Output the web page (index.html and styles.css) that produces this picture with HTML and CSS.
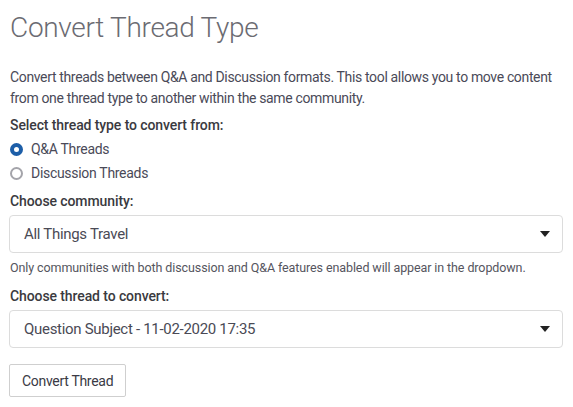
FILE: index.html
```html
<!DOCTYPE html>
<html>
<head>
<meta charset="utf-8">
<link rel="stylesheet" href="styles.css">
</head>
<body>
<div class="page">
  <h1 class="title">Convert Thread Type</h1>
  <p class="intro">Convert threads between Q&amp;A and Discussion formats. This tool allows you to move content from one thread type to another within the same community.</p>
  <div class="field">
    <div class="label">Select thread type to convert from:</div>
    <label class="radio"><span class="dot on"></span>Q&amp;A Threads</label>
    <label class="radio"><span class="dot"></span>Discussion Threads</label>
  </div>
  <div class="field">
    <div class="label">Choose community:</div>
    <div class="select"><span>All Things Travel</span><span class="caret"></span></div>
    <div class="help">Only communities with both discussion and Q&amp;A features enabled will appear in the dropdown.</div>
  </div>
  <div class="field">
    <div class="label">Choose thread to convert:</div>
    <div class="select"><span>Question Subject - 11-02-2020 17:35</span><span class="caret"></span></div>
  </div>
  <button class="btn">Convert Thread</button>
</div>
</body>
</html>
```
FILE: styles.css
```css
html, body { margin: 0; padding: 0; background: #fff; }
body { font-family: Roboto, "Noto Sans", sans-serif; color: #4a4a55; }
.page { padding: 12px 10px 0 9px; }
.title { margin: 0 0 0 1px; font-size: 28px; font-weight: 300; color: #6b6b72; line-height: 32px; letter-spacing: -0.3px; }
.intro { margin: 23px 0 0 1px; font-size: 14px; line-height: 21px; color: #4a4a58; letter-spacing: -0.35px; }
.field { margin-top: 8px; display: flex; flex-direction: column; }
.field:first-of-type { margin-top: 6px; }
.label { font-size: 14px; font-weight: 500; color: #3a3a40; line-height: 20px; margin: 0 0 4px 1px; letter-spacing: -0.1px; }
.radio { display: flex; align-items: center; font-size: 14px; color: #4a4a58; line-height: 20px; margin-bottom: 4px; letter-spacing: -0.3px; }
.radio:last-child { margin-bottom: 0; }
.dot { width: 9px; height: 9px; border-radius: 50%; border: 2px solid #a4a4aa; margin: 0 8px 0 1px; box-sizing: content-box; flex: none; }
.dot.on { border: 4px solid #1d5ea8; width: 5px; height: 5px; background: #fff; }
.select { display: flex; align-items: center; justify-content: space-between; border: 1px solid #dcdcdc; border-radius: 4px; padding: 0 12px 0 14px; font-size: 15px; color: #4a4a55; box-sizing: border-box; height: 38px; letter-spacing: -0.3px; }
.caret { width: 0; height: 0; border-left: 5px solid transparent; border-right: 5px solid transparent; border-top: 6px solid #222; }
.help { font-size: 12.5px; color: #55555e; margin: 7px 0 2px 1px; line-height: 16px; letter-spacing: -0.1px; }
.btn { margin-top: 16px; font-family: inherit; font-size: 14px; color: #3a3a45; background: #fff; border: 1px solid #cfcfcf; border-radius: 2px; height: 33px; padding: 0 12px; letter-spacing: -0.3px; }
```
